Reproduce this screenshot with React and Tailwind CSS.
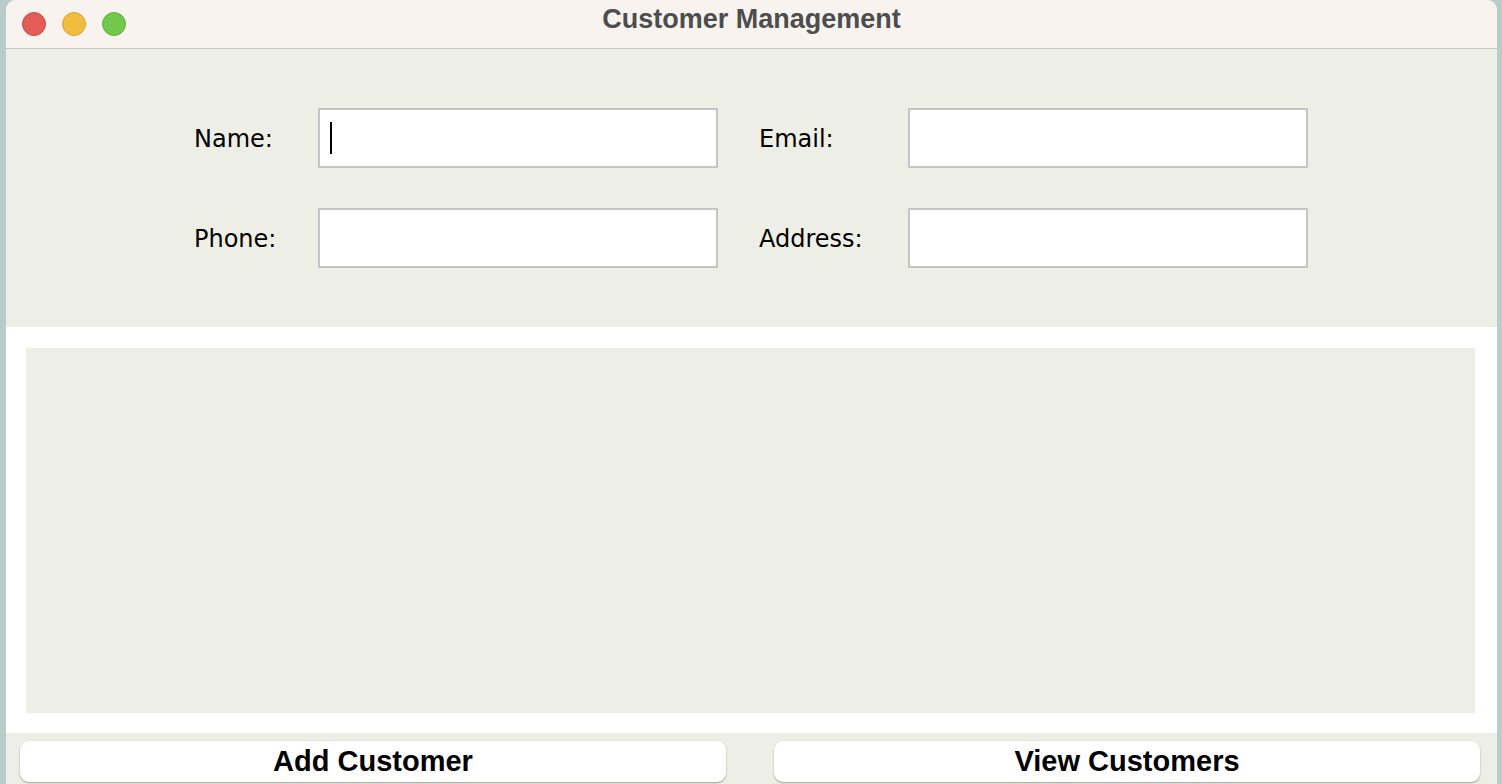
export default function App() {
  const label = "text-[24px] text-black leading-none pt-[2px]";
  const input = "h-[60px] w-[400px] bg-white border-2 border-[#c4c4c4] relative";
  return (
    <div className="w-[1502px] h-[784px] bg-[#b9ccc9] flex overflow-hidden" style={{ fontFamily: '"Liberation Sans", Arial, sans-serif' }}>
      <div className="ml-[6px] mr-[5px] flex-1 flex flex-col bg-[#edefe7] rounded-t-[10px] overflow-hidden">
        <div className="h-[49px] shrink-0 bg-[#f8f3ef] border-b border-[#c9c9c4] flex items-center relative">
          <div className="flex gap-[16px] ml-[16px]">
            <div className="w-[24px] h-[24px] rounded-full bg-[#e25d57] border border-[#cc4a45]" />
            <div className="w-[24px] h-[24px] rounded-full bg-[#f1bd40] border border-[#d9a530]" />
            <div className="w-[24px] h-[24px] rounded-full bg-[#72c84c] border border-[#5fb23d]" />
          </div>
          <div className="absolute inset-x-0 top-0 h-[39px] flex items-center justify-center pointer-events-none">
            <span className="text-[27px] font-bold text-[#4d4d4d]">Customer Management</span>
          </div>
        </div>
        <div className="h-[278px] shrink-0 flex flex-col pl-[188px] pt-[59px] gap-[40px]" style={{ fontFamily: '"DejaVu Sans", sans-serif' }}>
          <div className="flex items-center">
            <div className={`${label} w-[124px]`}>Name:</div>
            <div className={input}>
              <div className="absolute left-[10px] top-[12px] w-[2px] h-[32px] bg-black" />
            </div>
            <div className={`${label} w-[190px] pl-[41px]`}>Email:</div>
            <div className={input} />
          </div>
          <div className="flex items-center">
            <div className={`${label} w-[124px]`}>Phone:</div>
            <div className={input} />
            <div className={`${label} w-[190px] pl-[41px]`}>Address:</div>
            <div className={input} />
          </div>
        </div>
        <div className="h-[406px] shrink-0 bg-white pl-[20px] pr-[22px] pt-[21px] pb-[20px]">
          <div className="h-full bg-[#edefe7]" />
        </div>
        <div className="flex-1 flex gap-[48px] pl-[14px] pr-[17px] pt-[8px]">
          <button className="flex-1 h-[41px] bg-white rounded-[9px] shadow-[0_1px_2px_rgba(0,0,0,0.35)] text-[29px] font-bold text-black leading-none">Add Customer</button>
          <button className="flex-1 h-[41px] bg-white rounded-[9px] shadow-[0_1px_2px_rgba(0,0,0,0.35)] text-[29px] font-bold text-black leading-none">View Customers</button>
        </div>
      </div>
    </div>
  );
}
